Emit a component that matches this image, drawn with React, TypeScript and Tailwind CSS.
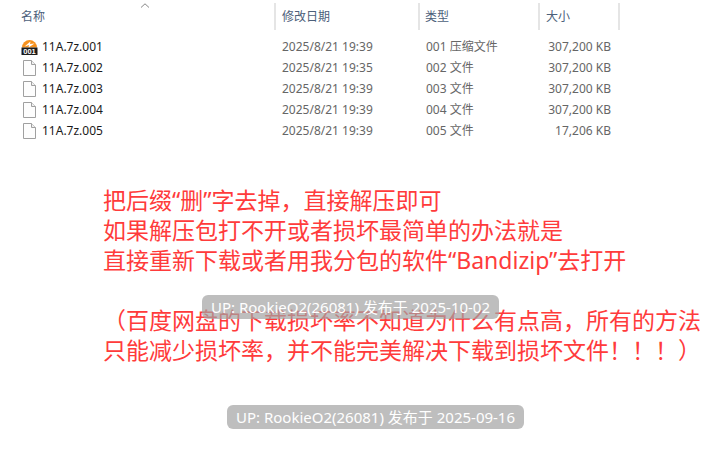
const files = [
  { name: "11A.7z.001", date: "2025/8/21 19:39", type: "001 压缩文件", size: "307,200 KB" },
  { name: "11A.7z.002", date: "2025/8/21 19:35", type: "002 文件", size: "307,200 KB" },
  { name: "11A.7z.003", date: "2025/8/21 19:39", type: "003 文件", size: "307,200 KB" },
  { name: "11A.7z.004", date: "2025/8/21 19:39", type: "004 文件", size: "307,200 KB" },
  { name: "11A.7z.005", date: "2025/8/21 19:39", type: "005 文件", size: "17,206 KB" },
];

const lines = [
  "把后缀“删”字去掉，直接解压即可",
  "如果解压包打不开或者损坏最简单的办法就是",
  "直接重新下载或者用我分包的软件“Bandizip”去打开",
  "",
  "（百度网盘的下载损坏率不知道为什么有点高，所有的方法",
  "只能减少损坏率，并不能完美解决下载到损坏文件！！！）",
];

function ArchiveIcon() {
  return (
    <svg width="17" height="17" viewBox="0 0 17 17" className="shrink-0">
      <path d="M1 9.5a7.5 7.5 0 0 1 15 0z" fill="#f7921e" />
      <path d="M3.5 8.5 9.5 3.5 9 6l4.5-.5L7.5 9.5l.6-2.4z" fill="#fff" />
      <rect x="0.5" y="9.5" width="16" height="7.5" fill="#1c1c1c" />
      <text x="8.5" y="15.9" textAnchor="middle" fontSize="7.5" fontWeight="700" fill="#fff" fontFamily="Liberation Sans, sans-serif">
        001
      </text>
    </svg>
  );
}

function FileIcon() {
  return (
    <svg width="13" height="16" viewBox="0 0 13 16" className="shrink-0">
      <path d="M.5.5h8l4 4v11H.5z" fill="#fdfdfd" stroke="#a0a0a0" />
      <path d="M8.5.5v4h4" fill="#f0f0f0" stroke="#a0a0a0" />
    </svg>
  );
}

function Badge({ text, className }: { text: string; className: string }) {
  return (
    <div className={`absolute flex h-[24px] items-center justify-center rounded-md bg-[#a3a3a3]/70 text-[15px] text-white ${className}`}>
      {text}
    </div>
  );
}

export default function App() {
  return (
    <div className="relative h-[465px] w-[716px] overflow-hidden bg-white font-['Noto_Sans','Noto_Sans_CJK_SC',sans-serif]">
      {/* Explorer header */}
      <div className="flex h-[30px] pt-[3px] text-[12px] text-[#4c607a]">
        <div className="relative flex w-[276px] items-center border-r-2 border-[#e5e5e5] pl-[21px]">
          名称
          <svg width="10" height="5" viewBox="0 0 10 5" className="absolute left-[140px] top-[0px]">
            <path d="M1 4.5 5 .8l4 3.7" fill="none" stroke="#888" />
          </svg>
        </div>
        <div className="flex w-[144px] items-center border-r-2 border-[#e5e5e5] pl-[6px]">修改日期</div>
        <div className="flex w-[120px] items-center border-r-2 border-[#e5e5e5] pl-[5px]">类型</div>
        <div className="flex w-[80px] items-center border-r-2 border-[#e5e5e5] pl-[6px]">大小</div>
      </div>

      {/* File rows */}
      <div className="mt-[6px] flex flex-col text-[12px] text-[#666]">
        {files.map((f, i) => (
          <div key={f.name} className="flex h-[21px] items-center">
            <div className="flex w-[276px] items-center pl-[21px]">
              <div className="flex w-[21px] justify-center pr-[4px]">{i === 0 ? <ArchiveIcon /> : <FileIcon />}</div>
              <span className="text-[#1a1a1a]">{f.name}</span>
            </div>
            <div className="w-[144px] pl-[6px]">{f.date}</div>
            <div className="w-[120px] pl-[6px]">{f.type}</div>
            <div className="w-[71px] text-right">{f.size}</div>
          </div>
        ))}
      </div>

      {/* Red note */}
      <div className="mt-[44px] pl-[103px] text-[23px] leading-[30px] whitespace-nowrap text-[#ff3b3b]">
        {lines.map((line, i) => (
          <div key={i} className={line ? "" : "h-[30px]"}>
            {line}
          </div>
        ))}
      </div>

      <Badge text="UP: RookieO2(26081) 发布于 2025-10-02" className="left-[202px] top-[295px] w-[297px]" />
      <Badge text="UP: RookieO2(26081) 发布于 2025-09-16" className="left-[227px] top-[405px] w-[297px]" />
    </div>
  );
}
